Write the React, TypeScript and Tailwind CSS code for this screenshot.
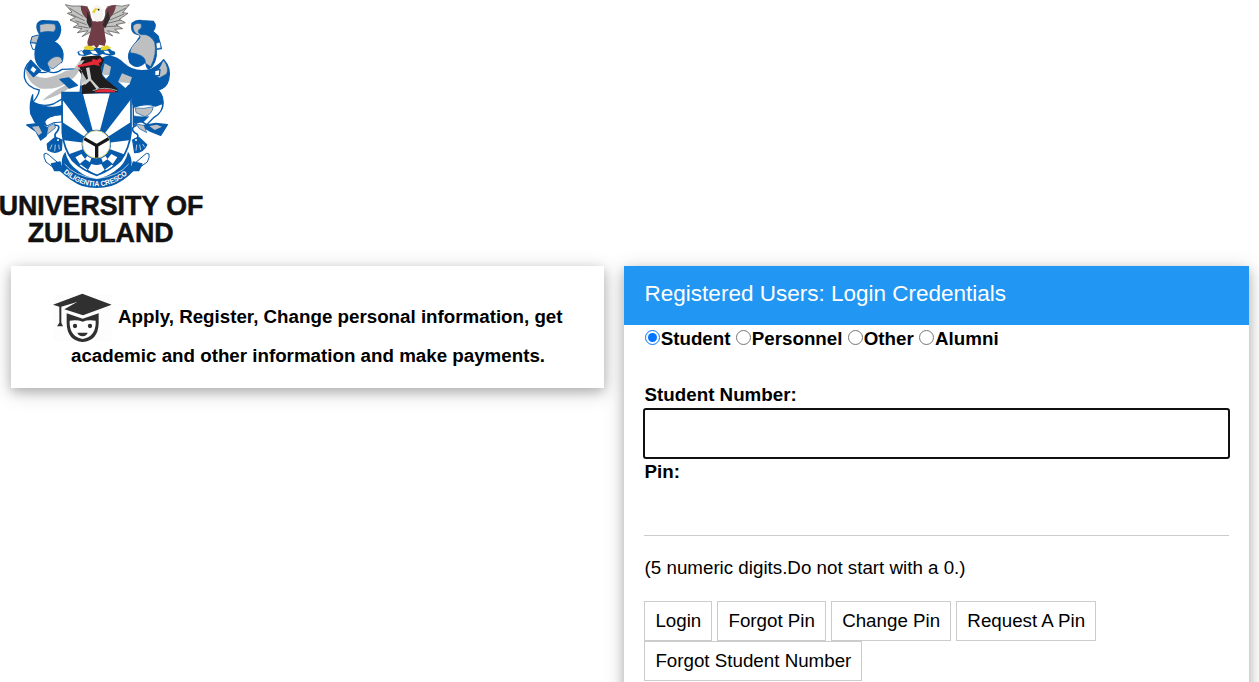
import React from "react";

const BLUE = "#075bab";
const GREY = "#bdbfc1";

function Crest() {
  return (
    <svg viewBox="0 0 630 750" width="210" height="250" className="block" role="img" aria-label="University crest">
      {/* left mantling */}
      <g stroke={BLUE} strokeWidth="4" strokeLinejoin="round">
        <path d="M112 72Q118 60 135 62L172 64Q186 78 180 100Q176 118 160 124Q186 136 189 162Q190 176 184 188Q164 164 144 182Q140 198 150 210Q128 216 114 194Q102 176 106 150Q110 126 120 104Q108 88 112 72Z" fill={BLUE} />
        <path d="M119 74Q140 68 164 72Q172 84 162 96Q142 92 120 98Z" fill={GREY} strokeWidth="2" />
        <path d="M96 110L119 104L110 130L91 128Z" fill={GREY} strokeWidth="3" />
        <path d="M91 128L109 130L106 148L98 148Z" fill="#fff" strokeWidth="3" />
        <path d="M142 190Q160 162 182 172L188 184L160 206Q144 204 142 190Z" fill={GREY} strokeWidth="2" />
        <path d="M92 182Q70 200 73 232Q80 262 118 270Q116 286 98 308Q130 322 160 312L188 296L192 280H240L248 206L186 208Q168 224 144 214Q128 222 112 214Z" fill="#fff" />
        <path d="M76 208Q98 232 138 234Q174 226 198 212L240 206Q226 236 202 246Q176 270 124 266Q84 254 76 208Z" fill={GREY} stroke="none" />
        <path d="M92 181L122 212L100 230L80 207Z" fill={BLUE} />
        <path d="M98 198L110 208L102 220L90 210Z" fill="#fff" strokeWidth="2" />
        <path d="M126 302Q160 272 204 252L212 262Q178 288 126 302Z" fill={GREY} stroke="none" />
        <path d="M180 238L206 234L232 256L208 264Z" fill={BLUE} />
      </g>

      {/* right mantling */}
      <g stroke={BLUE} strokeWidth="4" strokeLinejoin="round">
        <path d="M308 174Q340 160 370 190Q404 222 454 208Q480 194 491 179Q514 204 506 238Q500 264 474 270Q494 290 488 320L440 318Q416 312 400 322L394 280L352 276L330 248L300 222Z" fill={BLUE} />
        <path d="M396 70Q410 58 426 62L460 64Q472 78 458 94L474 108L484 146L468 148L464 132Q478 170 454 202Q438 214 438 184Q412 212 390 188Q378 160 400 140L424 104Q390 106 396 70Z" fill={BLUE} />
        <path d="M399 78Q408 66 424 72Q428 84 416 90Q412 102 426 104Q448 100 464 126Q472 162 452 200L436 190Q440 164 390 158Q390 142 412 122Q430 108 410 102Q398 94 399 78Z" fill={GREY} strokeWidth="2" />
        <path d="M468 130L480 126L483 144L470 146Z" fill="#fff" strokeWidth="2" />
        <path d="M491 181Q508 204 500 222L478 234L460 222Q482 204 486 188Z" fill={GREY} strokeWidth="2" />
        <path d="M464 212L480 208L478 226L464 228Z" fill="#fff" />
      </g>
      <path d="M314 190L333 200L328 226L306 222Z" fill={GREY} />
      <path d="M306 222L328 226L318 236Z" fill="#fff" />
      <path d="M366 220L396 232L388 254L354 246Z" fill={GREY} />
      <path d="M356 246L390 250L376 264Z" fill="#fff" />

      {/* lower ribbons, left */}
      <g stroke={BLUE} strokeWidth="4" strokeLinejoin="round">
        <path d="M98 284Q88 310 92 340L104 364L132 368Q150 352 186 348V318Q146 330 98 306Z" fill={BLUE} />
        <path d="M186 318Q142 330 110 350Q96 362 112 372L142 376Q128 360 150 350L186 342Z" fill={BLUE} />
        <path d="M134 366Q142 346 186 344V366Q160 364 140 378Z" fill="#fff" strokeWidth="3" />
        <path d="M80 375L118 370L144 384L138 408L122 420L108 394Z" fill={BLUE} />
        <path d="M96 380L116 378L126 398L116 406Z" fill={GREY} stroke="none" />
        <path d="M144 380L164 370L166 384L140 404Z" fill={GREY} strokeWidth="2" />
        <path d="M164 376Q184 374 172 394Q160 404 168 414" fill="none" strokeWidth="5" />
        <path d="M142 432L166 412L186 420L184 450Q166 464 144 450Z" fill={BLUE} />
        <path d="M156 434L150 448M166 434L164 454M176 434L178 448" stroke="#fff" strokeWidth="2" />
        <circle cx="174" cy="420" r="5" fill="#fff" />
        <path d="M132 462Q138 456 148 466L178 492L162 504L138 486Q130 470 132 462Z" fill="#fff" strokeWidth="3" />
        <path d="M154 492L180 486L188 512L164 512Z" fill={BLUE} />
      </g>

      {/* lower ribbons, right */}
      <g stroke={BLUE} strokeWidth="4" strokeLinejoin="round">
        <path d="M400 322Q436 308 466 318L488 310Q490 336 462 352L440 374L420 362L400 376Z" fill="#fff" />
        <path d="M406 324Q430 328 460 320Q456 344 434 350L408 338Z" fill={GREY} strokeWidth="2" />
        <path d="M402 348Q424 352 446 350L430 366L400 370Z" fill={BLUE} strokeWidth="2" />
        <path d="M432 376L468 370L502 374L482 406L452 394L438 386Z" fill={BLUE} />
        <path d="M448 378L470 374L486 380L464 390Z" fill={GREY} stroke="none" />
        <path d="M408 372L432 376L440 398L418 386Z" fill={GREY} strokeWidth="2" />
        <path d="M410 376Q388 384 404 398Q420 404 410 416" fill="none" strokeWidth="5" />
        <path d="M398 420L416 412L440 434Q432 456 404 458Z" fill={BLUE} />
        <path d="M410 434L408 452M419 434L422 450M428 432L434 442" stroke="#fff" strokeWidth="2" />
        <circle cx="408" cy="420" r="5" fill="#fff" />
        <path d="M447 462Q440 456 432 466L402 492L416 504L442 486Q450 470 447 462Z" fill="#fff" strokeWidth="3" />
        <path d="M426 492L400 486L392 512L416 512Z" fill={BLUE} />
      </g>

      {/* shield */}
      <clipPath id="shield">
        <path d="M186 278H393V398Q388 446 362 482Q330 512 291 526Q248 512 218 482Q190 444 187 398Z" />
      </clipPath>
      <g clipPath="url(#shield)">
        <rect x="180" y="270" width="220" height="270" fill="#fff" />
        <g fill={BLUE}>
          <path d="M186 278H248L289 433L186 298Z" />
          <path d="M393 278H330L289 433L393 298Z" />
          <path d="M186 366L289 433L186 420Z" />
          <path d="M393 366L289 433L393 420Z" />
          <path d="M186 470L289 433L214 530Z" />
          <path d="M393 470L289 433L364 530Z" />
          <path d="M254 530L289 433L324 530Z" />
        </g>
        <path d="M226 472L244 462L256 478L240 492ZM352 472L334 462L322 478L338 492ZM274 492Q290 498 304 492L314 510L291 526L264 510Z" fill="#fff" />
        <path d="M240 492L256 478L274 490L262 508ZM338 492L322 478L304 490L316 508Z" fill={BLUE} />
      </g>
      <path d="M186 278H393V398Q388 446 362 482Q330 512 291 526Q248 512 218 482Q190 444 187 398Z" fill="none" stroke={BLUE} strokeWidth="5" />
      <circle cx="289" cy="433" r="44" fill={BLUE} />
      <circle cx="289" cy="433" r="41" fill="#fff" stroke="#d6ce83" strokeWidth="3" />
      <path d="M253 416L290 437L326 416M290 436V473" fill="none" stroke="#171717" strokeWidth="10" />

      {/* motto ribbon */}
      <path d="M196 455Q182 474 186 496L180 514Q214 546 246 558Q290 570 334 558Q370 546 400 514L394 496Q398 474 384 455Q378 490 344 514Q316 534 291 536Q260 534 236 514Q202 490 196 455Z" fill={BLUE} />
      <path d="M194 492Q222 528 291 536Q358 528 386 492" fill="none" stroke="#fff" strokeWidth="2" />
      <path id="motto" d="M190 518Q236 558 291 559Q346 558 392 514" fill="none" />
      <text fill="#fff" fontFamily="Liberation Sans, sans-serif" fontWeight="bold" fontSize="22">
        <textPath href="#motto" textLength="212" lengthAdjust="spacingAndGlyphs">DILIGENTIA CRESCO</textPath>
      </text>

      {/* helmet */}
      <path d="M246 170L300 166L312 180L302 204L308 230L354 268V276L244 282V258L260 248L232 204Z" fill="#201d1e" />
      <path d="M222 206L240 182L254 180L238 202L260 240L240 258L246 210Z" fill={GREY} />
      <path d="M258 204L268 202L274 238L298 264L290 268L270 242L256 254L246 248L264 236Z" fill="#d0d0d1" />
      <path d="M234 196L276 184L278 176L290 180L301 174L306 184L296 190L300 198L282 194L234 202Z" fill="#e52835" />
      <path d="M286 272Q316 262 344 272L346 277L284 277Z" fill="#e52835" />
      <path d="M278 272Q312 258 352 272" fill="none" stroke="#eee" strokeWidth="2" />
      <path d="M186 280H246M350 278H393" stroke={BLUE} strokeWidth="6" />

      {/* eagle */}
      <path d="M196 14Q214 20 240 18L262 20L276 94L246 110L264 92L232 98L246 86L220 82L236 72L210 60L226 52L202 40L216 36Z" fill="#c4c4c3" stroke="#4c4444" strokeWidth="2" />
      <path d="M388 14Q364 22 344 16L322 20L306 94L338 108L322 92L358 100L344 88L368 86L348 74L376 68L358 58L384 40L368 38Z" fill="#c4c4c3" stroke="#4c4444" strokeWidth="2" />
      <path d="M208 24L250 50M212 42L254 62M226 62L260 74M234 78L266 84M378 24L334 46M372 42L330 60M362 60L322 70M354 78L316 80" stroke="#666" strokeWidth="2.5" />
      <path d="M242 18Q262 14 270 36Q272 54 278 64L306 64Q318 54 316 30Q326 14 348 16Q346 36 330 54L312 86L318 124L314 138L298 134L290 146L282 136L264 140L262 126L274 86L264 60Q242 42 242 18Z" fill="#703c46" />
      <path d="M262 34L270 48L276 74L270 86L260 66ZM324 32L316 52L308 76L316 84L330 56Z" fill="#302b2c" />
      <path d="M276 36Q278 14 294 15Q312 22 310 46Q304 68 288 64Q274 52 276 36Z" fill="#f5f4f1" />
      <path d="M276 36L286 24L300 28L288 31L284 40Z" fill="#e5d22c" />
      <circle cx="296" cy="29" r="2.5" fill="#222" />

      {/* torse */}
      <path d="M232 156Q238 150 248 152L258 144L326 144L336 152Q350 154 344 164L330 168L308 162L292 168L274 162L254 168L236 166Z" fill={BLUE} />
      <path d="M236 155L246 153L252 165L240 163ZM270 152L286 152L294 163L278 161ZM310 152L324 152L330 162L316 160Z" fill="#fff" />
      <path d="M252 142Q258 134 272 138L284 142L282 151L254 149ZM302 142L322 136L334 144L318 150L302 151Z" fill="#e5d22c" />

      {/* wordmark */}
      <g fill="#111" stroke="#111" strokeWidth="1.5" fontFamily="Liberation Sans, sans-serif" fontWeight="bold" fontSize="82">
        <text x="-4" y="644" textLength="614" lengthAdjust="spacingAndGlyphs">UNIVERSITY OF</text>
        <text x="83" y="725" textLength="438" lengthAdjust="spacingAndGlyphs">ZULULAND</text>
      </g>
    </svg>
  );
}

function GraduateIcon() {
  return (
    <svg viewBox="0 0 180 150" width="60" height="50" className="-my-[6px] mr-[4.6px] inline-block align-middle" aria-hidden="true">
      <defs>
        <pattern id="hatch" width="8" height="8" patternUnits="userSpaceOnUse" patternTransform="rotate(45)">
          <path d="M0 0V8" stroke="#eee" strokeWidth="2" />
        </pattern>
      </defs>
      <path d="M2 6H176V144H2Z" fill="url(#hatch)" />
      <g fill="#303030" transform="translate(0 2)">
        <path d="M0 33L88 0L176 33L90 65L34 47L72 25L25 39V87L30 98H12L19 87V39Z" />
        <path d="M41 59L89 75L137 59V88Q136 141 89 145Q42 141 41 88Z" />
        <path d="M50 81Q72 77 89 84Q106 77 128 81V92Q125 130 89 136Q53 130 50 92Z" fill="#fff" />
        <circle cx="66" cy="97" r="6.5" />
        <circle cx="111" cy="97" r="6.5" />
        <path d="M73 117H104Q101 127 89 128Q76 127 73 117Z" />
      </g>
    </svg>
  );
}

const roles = ["Student", "Personnel", "Other", "Alumni"];
const actions = ["Login", "Forgot Pin", "Change Pin", "Request A Pin", "Forgot Student Number"];
const cardShadow = "shadow-[0_4px_10px_rgba(0,0,0,0.2),0_4px_20px_rgba(0,0,0,0.19)]";

export default function App() {
  return (
    <div className="h-screen overflow-hidden bg-white font-['Liberation_Sans',Arial,sans-serif] text-[18.75px] leading-[28px] text-black">
      <header className="h-[266px]">
        <Crest />
      </header>
      <main className="flex items-start gap-5 pl-[11px]">
        <section className={`h-[122px] w-[593px] shrink-0 bg-white pt-8 text-center font-bold leading-[38px] ${cardShadow}`}>
          <p className="pl-[1px]">
            <GraduateIcon />
            Apply, Register, Change personal information, get
            <br />
            academic and other information and make payments.
          </p>
        </section>

        <section className={`h-[460px] w-[625px] shrink-0 bg-white ${cardShadow}`}>
          <h1 className="h-[59px] bg-[#2196f3] pl-[20.6px] pt-[11px] text-[22.5px] leading-[34px] text-white">
            Registered Users: Login Credentials
          </h1>
          <form className="px-5" onSubmit={(e) => e.preventDefault()}>
            <div className="flex h-[56px] gap-[5.3px] pl-[0.7px] font-bold">
              {roles.map((role, i) => (
                <label key={role} className="flex h-7 items-center">
                  <input type="radio" name="role" defaultChecked={i === 0} className="mb-[4px] mr-px size-[15px]" />
                  {role}
                </label>
              ))}
            </div>
            <label htmlFor="number" className="block pl-[0.6px] font-bold">Student Number:</label>
            <input
              id="number"
              className="-mx-px -mt-px block h-[51px] w-[587px] rounded-[3px] border-2 border-[#101010] px-2 outline-none"
            />
            <label htmlFor="pin" className="-mt-px block pl-[0.6px] font-bold">Pin:</label>
            <input id="pin" type="password" className="block h-[50px] w-full border-b border-[#ccc] px-2 outline-none" />
            <p className="mt-[18px] pl-[0.6px]">(5 numeric digits.Do not start with a 0.)</p>
            <div className="mt-[19px] flex flex-wrap gap-x-[5px]">
              {actions.map((action) => (
                <button key={action} type="button" className="h-10 border border-[#ccc] pl-[10.4px] pr-[9.8px] leading-[38px]">
                  {action}
                </button>
              ))}
            </div>
          </form>
        </section>
      </main>
    </div>
  );
}
